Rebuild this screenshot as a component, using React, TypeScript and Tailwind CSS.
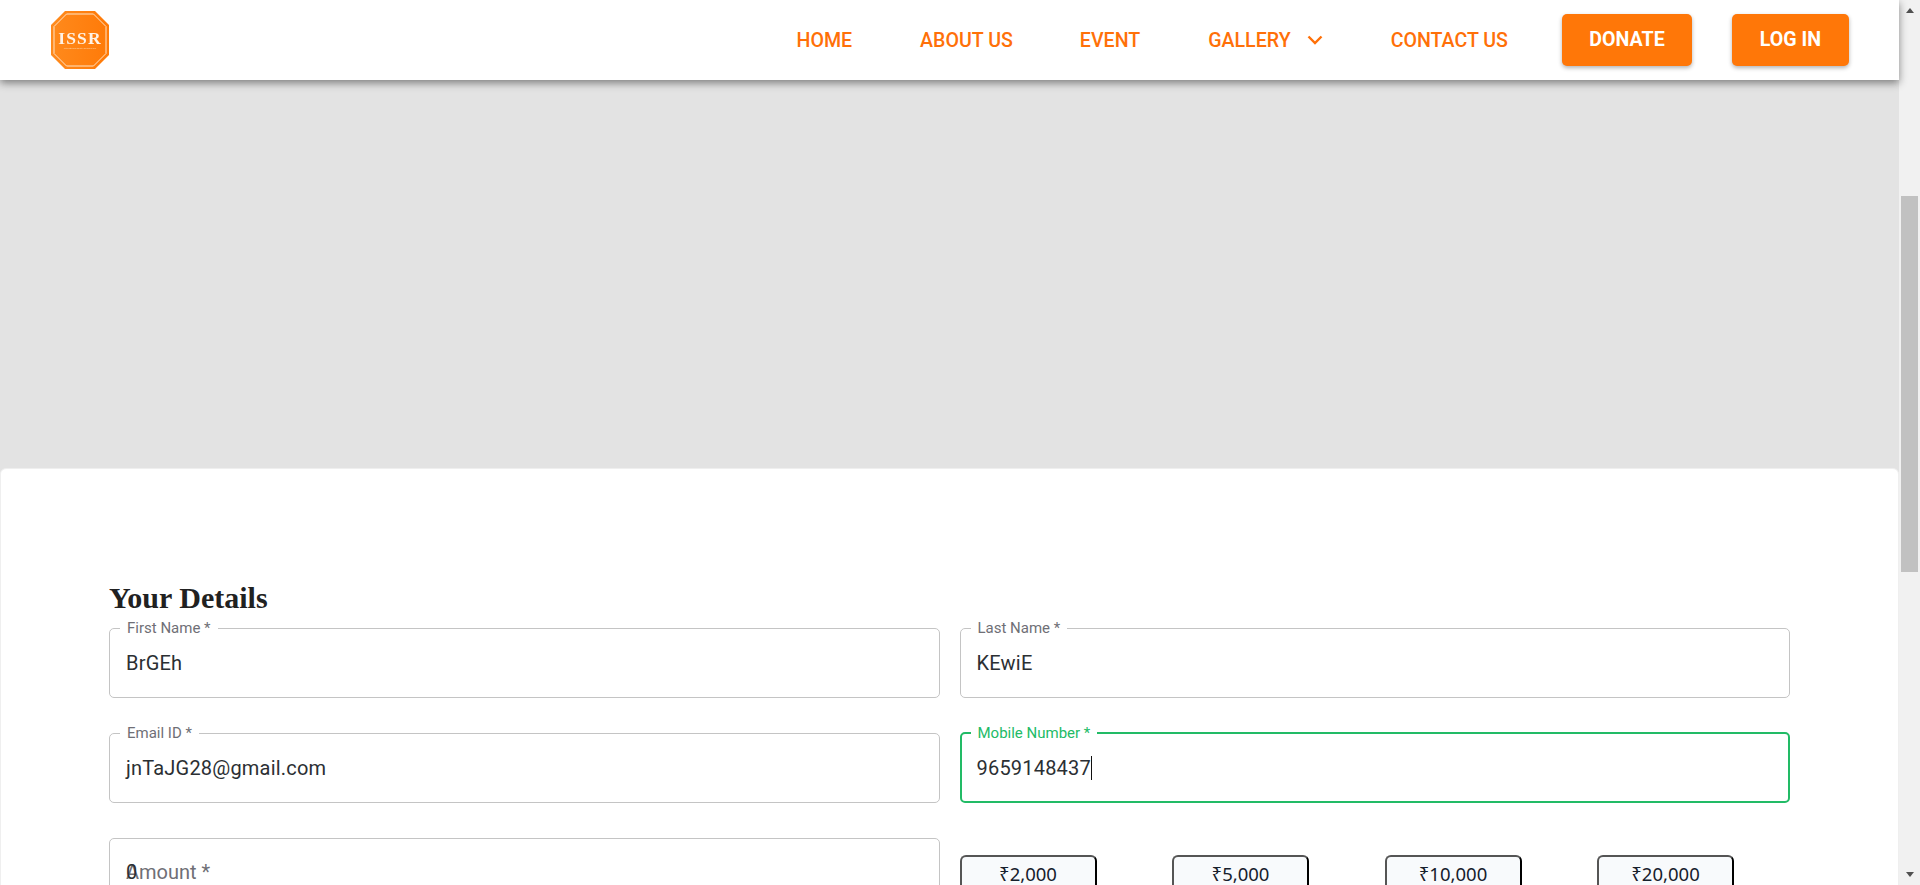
const navLinks = [
  { label: "HOME", className: "ml-0 pt-0.5" },
  { label: "ABOUT US", className: "ml-[68px] pt-0.5" },
  { label: "EVENT", className: "ml-[67px] pt-0.5" },
];

function Logo() {
  return (
    <svg width="62" height="62" viewBox="0 0 62 62" className="ml-[49px] blur-[0.4px]">
      <defs>
        <linearGradient id="logoFill" x1="0" x2="1" y1="0" y2="0">
          <stop offset="0" stopColor="#ff8a1c" />
          <stop offset="1" stopColor="#ff7a08" />
        </linearGradient>
      </defs>
      <polygon points="16,2 46,2 60,16 60,46 46,60 16,60 2,46 2,16" fill="url(#logoFill)" />
      <polygon
        points="17.5,5 44.5,5 57,17.5 57,44.5 44.5,57 17.5,57 5,44.5 5,17.5"
        fill="none"
        stroke="#ffe3c4"
        strokeWidth="1"
      />
      <text x="31" y="35" textAnchor="middle" fontFamily="Liberation Serif, serif" fontWeight="700" fontSize="17.5" letterSpacing="1.2" fill="#fff2e4">
        ISSR
      </text>
      <text x="31" y="39.5" textAnchor="middle" fontFamily="Liberation Sans, sans-serif" fontSize="2.2" fill="#ffd9b3">
        International Shelter Social Relief
      </text>
    </svg>
  );
}

function Header() {
  return (
    <header className="relative z-10 flex h-20 shrink-0 items-center bg-white shadow-[0_3px_8px_rgba(0,0,0,0.45)]">
      <Logo />
      <nav className="ml-auto flex items-center font-['Roboto',sans-serif] text-[19.6px] font-medium text-[#ff7008]">
        {navLinks.map((link) => (
          <a key={link.label} className={link.className}>
            {link.label}
          </a>
        ))}
        <a className="ml-[68px] pt-0.5">GALLERY</a>
        <svg width="16" height="16" viewBox="0 0 16 16" fill="none" stroke="currentColor" strokeWidth="2.4" className="ml-[16px]">
          <path d="M1.5 4.5 8 11l6.5-6.5" />
        </svg>
        <a className="ml-[68px] pt-0.5">CONTACT US</a>
        <button className="ml-[54px] h-[52px] w-[130px] rounded-[5px] bg-[#ff7708] font-bold text-white shadow-[0_2px_4px_rgba(0,0,0,0.3)]">
          DONATE
        </button>
        <button className="ml-[40px] mr-[50px] h-[52px] w-[117px] rounded-[5px] bg-[#ff7708] font-bold text-white shadow-[0_2px_4px_rgba(0,0,0,0.3)]">
          LOG IN
        </button>
      </nav>
    </header>
  );
}

function Field({
  label,
  value,
  focused = false,
}: {
  label: string;
  value: string;
  focused?: boolean;
}) {
  return (
    <fieldset
      className={
        focused
          ? "h-[77px] rounded-[5px] border-2 border-[#22bb66] px-[9px]"
          : "h-[77px] rounded-[5px] border border-[#c4c4c4] px-[10px]"
      }
    >
      <legend
        className={
          focused
            ? "px-[7px] text-[15px] leading-[14px] text-[#22bb66]"
            : "px-[7px] text-[15px] leading-[14px] text-[#6f6f76]"
        }
      >
        {label}
      </legend>
      <div className="flex h-[55px] items-center pl-[6px] text-[20px] tracking-[0.2px] text-[#2b2f33]">
        <span>{value}</span>
        {focused && <span className="h-6 w-px bg-[#111]" />}
      </div>
    </fieldset>
  );
}

function AmountButton({ amount }: { amount: string }) {
  return (
    <button className="h-[50px] w-[137px] rounded-[6px] border-2 border-t-[#555] border-r-black border-b-black border-l-[#555] bg-[#f8fafc] pb-3 font-['Noto_Sans',sans-serif] text-[18.5px] leading-[30px] text-[#16202c]">
      {amount}
    </button>
  );
}

function DetailsCard() {
  return (
    <section className="flex-1 rounded-t-[6px] border border-[#efefef] bg-white px-[108px] pt-[111px] font-['Roboto',sans-serif]">
      <h2 className="font-['Liberation_Serif',serif] text-[30px] leading-[36px] font-bold text-[#212121]">
        Your Details
      </h2>
      <div className="mt-[5px] grid grid-cols-2 gap-x-5 gap-y-7">
        <Field label="First Name *" value="BrGEh" />
        <Field label="Last Name *" value="KEwiE" />
        <Field label="Email ID *" value="jnTaJG28@gmail.com" />
        <Field label="Mobile Number *" value="9659148437" focused />
        <div className="relative mt-[7px] h-[70px] rounded-[5px] border border-[#c4c4c4] px-4 pt-[21px]">
          <span className="absolute top-[21px] left-4 text-[20px] leading-6 text-[#2b2f33]">0</span>
          <span className="text-[20px] leading-6 text-[#6f6f76]">Amount *</span>
        </div>
        <div className="flex justify-between overflow-hidden pt-6 pr-[56px]">
          <AmountButton amount="₹2,000" />
          <AmountButton amount="₹5,000" />
          <AmountButton amount="₹10,000" />
          <AmountButton amount="₹20,000" />
        </div>
      </div>
    </section>
  );
}

function Scrollbar() {
  return (
    <div className="flex w-[21px] shrink-0 flex-col items-center bg-[#f1f1f1]">
      <div className="flex h-[21px] items-center">
        <span className="border-x-[4.5px] border-b-[5px] border-x-transparent border-b-[#505050]" />
      </div>
      <div className="mt-[175px] h-[376px] w-[17px] shrink-0 bg-[#c1c1c1]" />
      <div className="mt-auto flex h-[21px] items-center">
        <span className="border-x-[4.5px] border-t-[5px] border-x-transparent border-t-[#505050]" />
      </div>
    </div>
  );
}

export default function App() {
  return (
    <div className="flex h-[885px] overflow-hidden bg-[#e3e3e3]">
      <div className="flex min-w-0 flex-1 flex-col">
        <Header />
        <div className="h-[388px] shrink-0" />
        <DetailsCard />
      </div>
      <Scrollbar />
    </div>
  );
}
